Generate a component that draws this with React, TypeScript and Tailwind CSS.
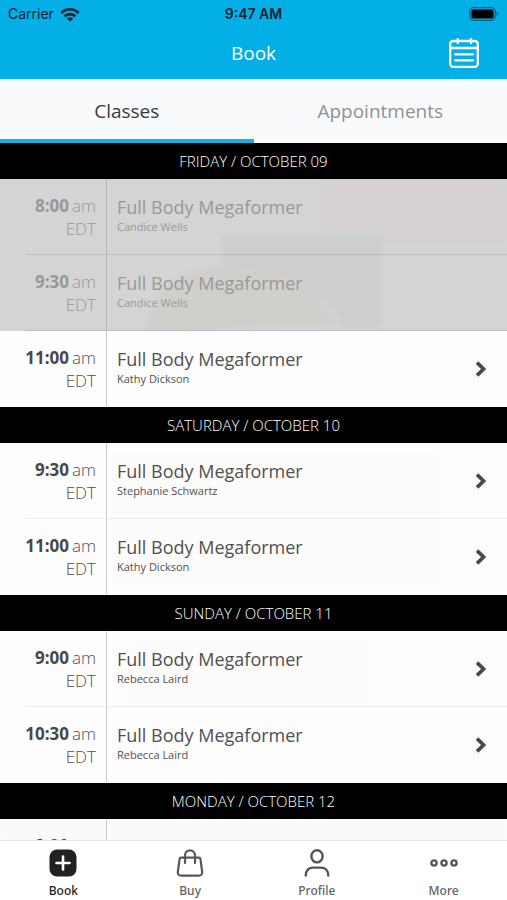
import React, { useState } from "react";
import clsx from "clsx";

type ClassItem = {
  time: string;
  title: string;
  teacher: string;
  past?: boolean;
};

type Day = {
  label: string;
  classes: ClassItem[];
};

const days: Day[] = [
  {
    label: "FRIDAY / OCTOBER 09",
    classes: [
      { time: "8:00", title: "Full Body Megaformer", teacher: "Candice Wells", past: true },
      { time: "9:30", title: "Full Body Megaformer", teacher: "Candice Wells", past: true },
      { time: "11:00", title: "Full Body Megaformer", teacher: "Kathy Dickson" },
    ],
  },
  {
    label: "SATURDAY / OCTOBER 10",
    classes: [
      { time: "9:30", title: "Full Body Megaformer", teacher: "Stephanie Schwartz" },
      { time: "11:00", title: "Full Body Megaformer", teacher: "Kathy Dickson" },
    ],
  },
  {
    label: "SUNDAY / OCTOBER 11",
    classes: [
      { time: "9:00", title: "Full Body Megaformer", teacher: "Rebecca Laird" },
      { time: "10:30", title: "Full Body Megaformer", teacher: "Rebecca Laird" },
    ],
  },
  {
    label: "MONDAY / OCTOBER 12",
    classes: [{ time: "8:00", title: "Full Body Megaformer", teacher: "Candice Wells" }],
  },
];

const WifiIcon = () => (
  <svg width="20" height="15" viewBox="0 0 20 15" fill="none" stroke="#04222e" strokeWidth="2.7">
    <path d="M1.4 6C6.2 1 13.8 1 18.6 6" />
    <path d="M4.6 9.3c3-3 7.800-3 10.800 0" />
    <path d="M10 14.600L6.800 11.400c1.900-1.600 4.500-1.600 6.400 0z" fill="#04222e" stroke="none" />
  </svg>
);

const BatteryIcon = () => (
  <svg width="30" height="14" viewBox="0 0 30 14">
    <rect x="0.7" y="0.7" width="25.6" height="12.6" rx="4" fill="none" stroke="#04607f" strokeWidth="1.2" />
    <rect x="2.4" y="2.4" width="22.2" height="9.2" rx="2.2" fill="#000" />
    <path d="M27.6 4.6c1.8 0.7 1.8 4.1 0 4.8z" fill="#04607f" />
  </svg>
);

const CalendarIcon = () => (
  <svg width="30" height="30" viewBox="0 0 30 30" fill="none" stroke="#fff" strokeWidth="2.3" strokeLinecap="round">
    <rect x="1.2" y="3" width="27.6" height="25.800" rx="3" />
    <path d="M1.2 10h27.600M8.700 1.200v4M22 1.200v4M6.200 16.300h17.800M6.200 22.300h17.800" />
  </svg>
);

const ChevronIcon = () => (
  <svg width="12" height="16" viewBox="0 0 12 16" fill="none" stroke="#484848" strokeWidth="3.6">
    <path d="M2 1.6L8.6 8L2 14.4" />
  </svg>
);

const BookIcon = () => (
  <svg width="28" height="28" viewBox="0 0 28 28">
    <rect x="0.5" y="0.5" width="27" height="27" rx="7.5" fill="#1f2123" />
    <path d="M14 7.5v13M7.5 14h13" stroke="#fff" strokeWidth="2.6" strokeLinecap="round" />
  </svg>
);

const BuyIcon = () => (
  <svg width="28" height="28" viewBox="0 0 28 28" fill="none" stroke="#54575a" strokeWidth="2.2" strokeLinecap="round" strokeLinejoin="round">
    <path d="M5.200 8.600h17.600a1.600 1.600 0 0 1 1.600 1.300l1.800 13.200a3.200 3.200 0 0 1-3.200 3.600H5a3.200 3.200 0 0 1-3.200-3.600L3.600 9.900a1.600 1.600 0 0 1 1.600-1.300z" />
    <path d="M9 14V6.400a5 5 0 0 1 10 0V14" />
  </svg>
);

const ProfileIcon = () => (
  <svg width="28" height="28" viewBox="0 0 28 28" fill="none" stroke="#54575a" strokeWidth="2.400" strokeLinecap="round">
    <ellipse cx="14" cy="7.300" rx="5.600" ry="6.100" />
    <path d="M2.800 26.600c0-5.200 3-8 7-8h8.400c4 0 7 2.800 7 8" />
  </svg>
);

const MoreIcon = () => (
  <svg width="28" height="28" viewBox="0 0 28 28" fill="none" stroke="#54575a" strokeWidth="2.400">
    <circle cx="4" cy="14" r="2.600" />
    <circle cx="14" cy="14" r="2.600" />
    <circle cx="24" cy="14" r="2.600" />
  </svg>
);

const navItems = [
  { label: "Book", icon: <BookIcon /> },
  { label: "Buy", icon: <BuyIcon /> },
  { label: "Profile", icon: <ProfileIcon /> },
  { label: "More", icon: <MoreIcon /> },
];

// Studio photo, washed out behind the schedule
const Backdrop = () => (
  <svg className="absolute inset-0 h-full w-full" viewBox="0 0 507 697" preserveAspectRatio="none" aria-hidden="true">
    <defs>
      <filter id="soft">
        <feGaussianBlur stdDeviation="2" />
      </filter>
    </defs>
    <rect width="507" height="697" fill="#fdfdfd" />
    <g filter="url(#soft)">
      <rect x="320" y="0" width="187" height="100" fill="#fefbfa" />
      <rect x="222" y="92" width="160" height="58" fill="#f6f6f7" />
      <path d="M146 190c4-50 40-68 92-68 50 0 84 20 98 60z" fill="#faf7f4" />
      <path d="M222 95h160v90h-40c-10-34-50-60-120-62z" fill="#f6f6f7" />
      <rect x="110" y="310" width="330" height="130" fill="#fdfcfb" />
      <rect x="130" y="500" width="240" height="60" fill="#fdfcfa" />
      <rect x="0" y="640" width="507" height="57" fill="#fafafa" />
    </g>
  </svg>
);

const ClassRow: React.FC<{ item: ClassItem; last: boolean }> = ({ item, last }) => (
  <button
    type="button"
    disabled={item.past}
    className={clsx("flex h-[76px] w-full text-left", item.past ? "bg-black/16 text-[#999897]" : "text-[#505050]")}
  >
    <span
      className={clsx(
        "ml-[25px] flex h-full flex-1 border-b",
        last ? "border-transparent" : item.past ? "border-black/10" : "border-black/6"
      )}
    >
      <span
        className={clsx(
          "flex w-[82px] flex-col border-r pt-[15px] pr-2.5 text-right text-[17px] leading-[23px]",
          item.past ? "border-black/15" : "border-black/20"
        )}
      >
        <span className="whitespace-nowrap">
          <span className={clsx("font-bold", !item.past && "text-[#484848]")}>{item.time}</span>
          <span className="ml-[3px] font-light">am</span>
        </span>
        <span className="font-light">EDT</span>
      </span>
      <span className="flex flex-1 flex-col pt-4 pl-2.5">
        <span className="text-[18px] leading-6">{item.title}</span>
        <span className="text-[11px] leading-4">{item.teacher}</span>
      </span>
      {!item.past && (
        <span className="flex items-center pr-5">
          <ChevronIcon />
        </span>
      )}
    </span>
  </button>
);

export default function App() {
  const [tab, setTab] = useState("Classes");
  const [page, setPage] = useState("Book");

  return (
    <div className="flex h-screen flex-col overflow-hidden bg-white font-['Open_Sans',sans-serif]">
      <header className="bg-[#02afe7]">
        <div className="grid h-7 grid-cols-3 items-center px-2 font-[Inter,sans-serif] text-sm text-[#04222e]">
          <div className="flex items-center gap-1.5">
            <span>Carrier</span>
            <WifiIcon />
          </div>
          <span className="text-center font-semibold">9:47 AM</span>
          <div className="flex justify-end">
            <BatteryIcon />
          </div>
        </div>
        <div className="grid h-[51px] grid-cols-3 items-start px-7 pt-2.5">
          <h1 className="col-start-2 text-center text-[19px] leading-[30px] text-white">Book</h1>
          <button type="button" aria-label="Calendar" className="justify-self-end">
            <CalendarIcon />
          </button>
        </div>
      </header>

      <div role="tablist" className="grid h-16 grid-cols-2 bg-[#f9fafc] text-[19px]">
        {["Classes", "Appointments"].map((name) => (
          <button
            key={name}
            type="button"
            role="tab"
            aria-selected={tab === name}
            onClick={() => setTab(name)}
            className={clsx(
              "border-b-4 pt-1",
              tab === name ? "border-[#14b0e6] text-[#37393c]" : "border-transparent text-[#8f9194]"
            )}
          >
            {name}
          </button>
        ))}
      </div>

      <main className="relative min-h-0 flex-1 overflow-x-hidden overflow-y-auto [scrollbar-width:none]">
        <Backdrop />
        <div className="relative">
          {days.map((day) => (
            <section key={day.label}>
              <h2 className="flex h-9 items-center justify-center bg-black text-[15px] font-light text-white">{day.label}</h2>
              {day.classes.map((item, index) => (
                <ClassRow key={index} item={item} last={index === day.classes.length - 1} />
              ))}
            </section>
          ))}
        </div>
      </main>

      <nav className="grid h-[60px] grid-cols-4 border-t border-[#e2e2e2] bg-white font-['Noto_Sans',sans-serif]">
        {navItems.map((item) => (
          <button
            key={item.label}
            type="button"
            onClick={() => setPage(item.label)}
            className={clsx(
              "flex flex-col items-center gap-1.5 pt-2 text-xs font-medium",
              page === item.label ? "text-[#1f2123]" : "text-[#606366]"
            )}
          >
            {item.icon}
            <span>{item.label}</span>
          </button>
        ))}
      </nav>
    </div>
  );
}
